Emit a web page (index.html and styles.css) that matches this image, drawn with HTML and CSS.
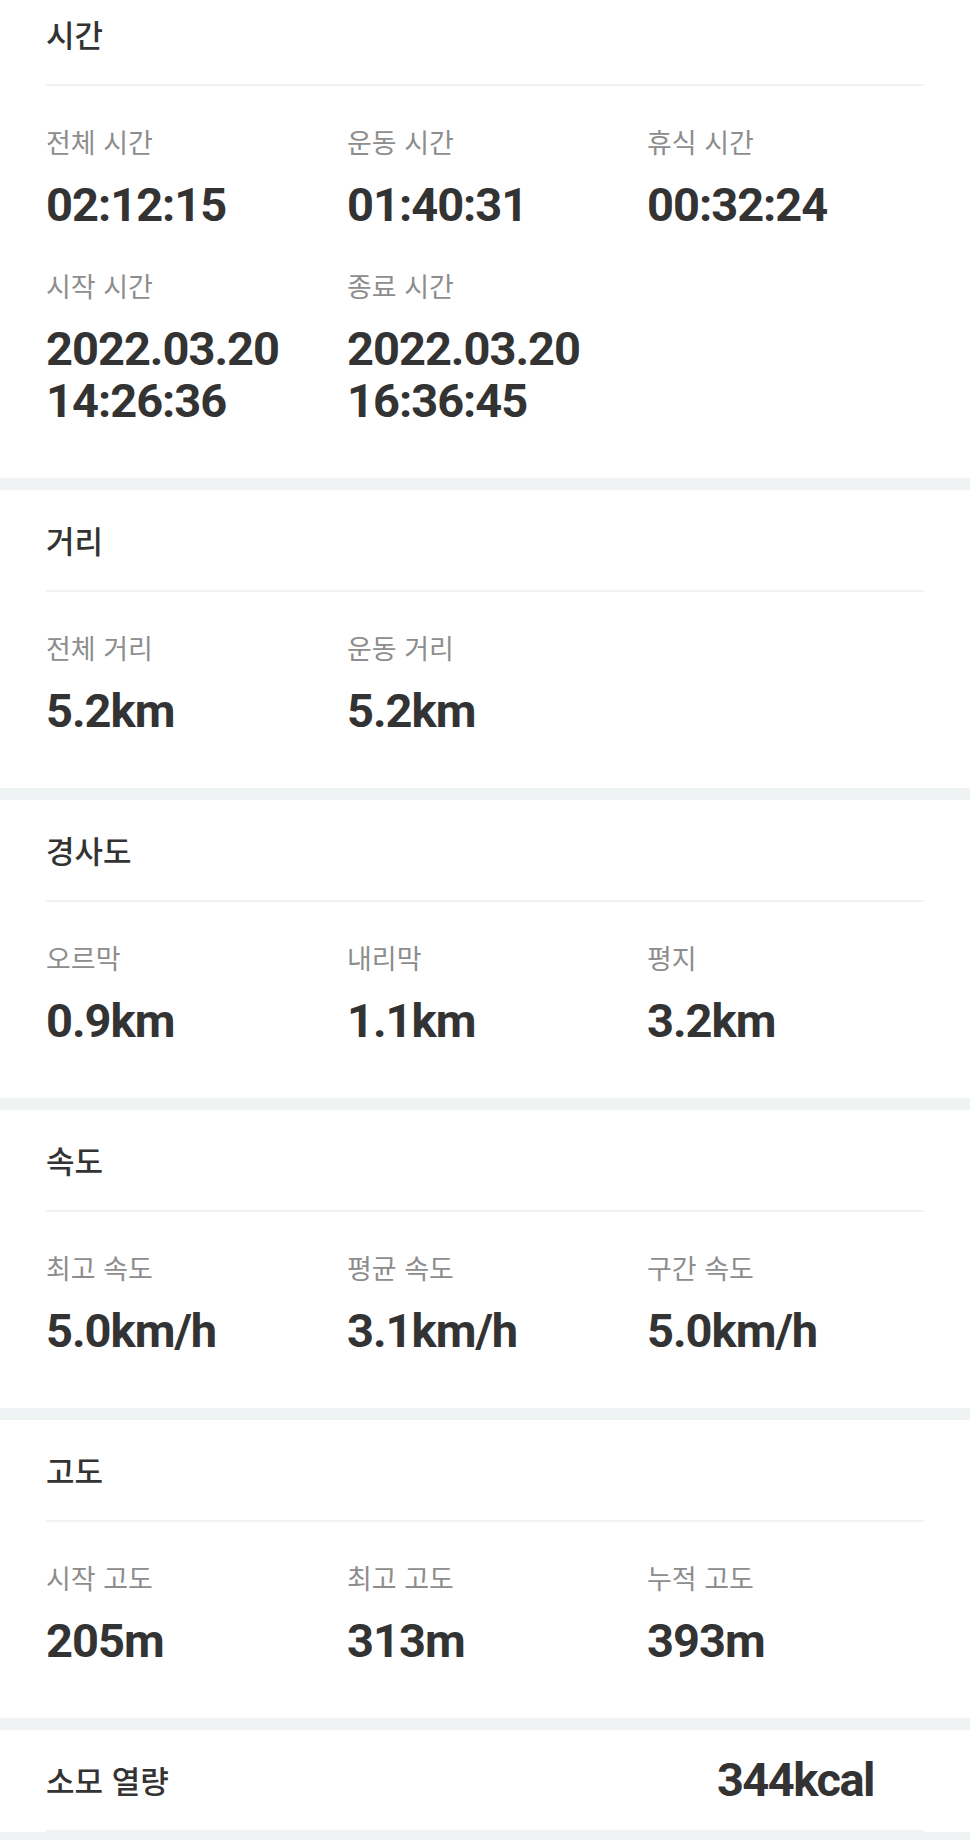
FILE: index.html
```html
<!DOCTYPE html>
<html lang="ko">
<head>
<meta charset="utf-8">
<title>운동 기록</title>
<link rel="stylesheet" href="styles.css">
</head>
<body>
<main class="page">
  <section class="card">
    <h2 class="card-head">시간</h2>
    <div class="stats">
      <div class="stat"><div class="label">전체 시간</div><div class="value">02:12:15</div></div>
      <div class="stat"><div class="label">운동 시간</div><div class="value">01:40:31</div></div>
      <div class="stat"><div class="label">휴식 시간</div><div class="value">00:32:24</div></div>
      <div class="stat"><div class="label">시작 시간</div><div class="value">2022.03.20<br>14:26:36</div></div>
      <div class="stat"><div class="label">종료 시간</div><div class="value">2022.03.20<br>16:36:45</div></div>
    </div>
  </section>

  <section class="card">
    <h2 class="card-head">거리</h2>
    <div class="stats">
      <div class="stat"><div class="label">전체 거리</div><div class="value">5.2km</div></div>
      <div class="stat"><div class="label">운동 거리</div><div class="value">5.2km</div></div>
    </div>
  </section>

  <section class="card">
    <h2 class="card-head">경사도</h2>
    <div class="stats">
      <div class="stat"><div class="label">오르막</div><div class="value">0.9km</div></div>
      <div class="stat"><div class="label">내리막</div><div class="value">1.1km</div></div>
      <div class="stat"><div class="label">평지</div><div class="value">3.2km</div></div>
    </div>
  </section>

  <section class="card">
    <h2 class="card-head">속도</h2>
    <div class="stats">
      <div class="stat"><div class="label">최고 속도</div><div class="value">5.0km/h</div></div>
      <div class="stat"><div class="label">평균 속도</div><div class="value">3.1km/h</div></div>
      <div class="stat"><div class="label">구간 속도</div><div class="value">5.0km/h</div></div>
    </div>
  </section>

  <section class="card">
    <h2 class="card-head">고도</h2>
    <div class="stats">
      <div class="stat"><div class="label">시작 고도</div><div class="value">205m</div></div>
      <div class="stat"><div class="label">최고 고도</div><div class="value">313m</div></div>
      <div class="stat"><div class="label">누적 고도</div><div class="value">393m</div></div>
    </div>
  </section>

  <section class="card card-last">
    <div class="card-head card-head-row">
      <h2 class="head-title">소모 열량</h2>
      <span class="kcal">344kcal</span>
    </div>
  </section>
</main>
</body>
</html>
```

FILE: styles.css
```css
html, body {
  margin: 0;
  padding: 0;
}

body {
  background: #f0f3f4;
  font-family: "Noto Sans CJK KR", "Noto Sans", sans-serif;
  color: #333333;
  overflow: hidden;
}

.page {
  display: flex;
  flex-direction: column;
  gap: 12px;
  margin-top: -16px;
}

.card {
  background: #ffffff;
  padding: 0 46px;
}

.card-head {
  margin: 0;
  display: flex;
  align-items: center;
  font-size: 31px;
  font-weight: 500;
  color: #333333;
  border-bottom: 2px solid #f1f2f3;
  box-sizing: border-box;
  height: 102px;
  padding-bottom: 2px;
}

.card-head-row {
  justify-content: space-between;
}

.head-title {
  margin: 0;
  font-size: 31px;
  font-weight: 500;
}

.kcal {
  font-family: Roboto, "Liberation Sans", sans-serif;
  font-weight: 700;
  font-size: 47px;
  letter-spacing: -1.5px;
  color: #333333;
  padding-right: 50px;
}

.stats {
  display: grid;
  grid-template-columns: 301px 300px 1fr;
  row-gap: 37px;
  padding: 38px 0 51px;
}

.label {
  font-size: 27px;
  line-height: 36px;
  color: #8d8d8d;
}

.value {
  margin-top: 19px;
  font-family: Roboto, "Liberation Sans", sans-serif;
  font-weight: 700;
  font-size: 47px;
  line-height: 52px;
  letter-spacing: -1px;
  color: #333333;
}
```
